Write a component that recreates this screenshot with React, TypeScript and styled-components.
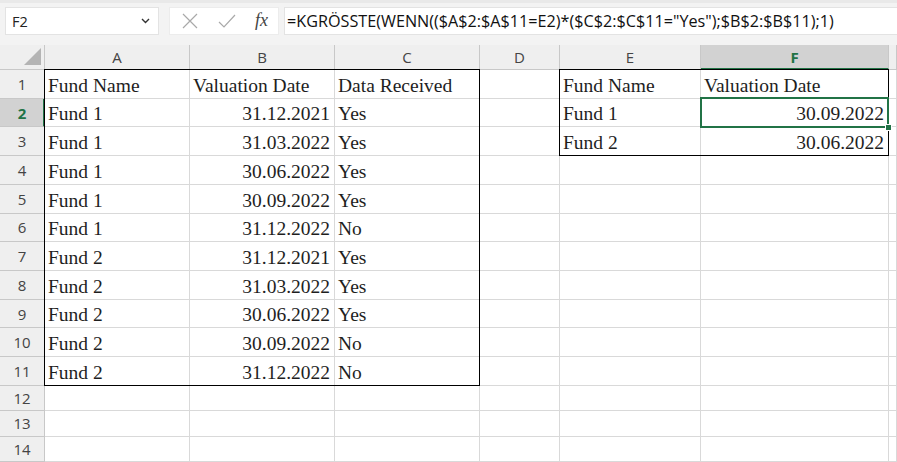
import styled, { createGlobalStyle } from "styled-components";

const GlobalStyle = createGlobalStyle`
  html, body {
    margin: 0;
    padding: 0;
    background: #ffffff;
    overflow: hidden;
  }
  * {
    box-sizing: border-box;
  }
`;

const GREEN = "#217346";
const GRID = "#d9d9d9";
const HEAD_LINE = "#c8c8c8";

const COLS = ["A", "B", "C", "D", "E", "F", "G"];
const FORMULA =
  '=KGRÖSSTE(WENN(($A$2:$A$11=E2)*($C$2:$C$11="Yes");$B$2:$B$11);1)';

type Align = "left" | "right";

interface ICell {
  text: string;
  align: Align;
}

const leftRows: [string, string, string][] = [
  ["Fund 1", "31.12.2021", "Yes"],
  ["Fund 1", "31.03.2022", "Yes"],
  ["Fund 1", "30.06.2022", "Yes"],
  ["Fund 1", "30.09.2022", "Yes"],
  ["Fund 1", "31.12.2022", "No"],
  ["Fund 2", "31.12.2021", "Yes"],
  ["Fund 2", "31.03.2022", "Yes"],
  ["Fund 2", "30.06.2022", "Yes"],
  ["Fund 2", "30.09.2022", "No"],
  ["Fund 2", "31.12.2022", "No"],
];

// row index (1-based) -> column letter -> cell
const buildCells = () => {
  const cells: Record<number, Record<string, ICell>> = {};
  cells[1] = {
    A: { text: "Fund Name", align: "left" },
    B: { text: "Valuation Date", align: "left" },
    C: { text: "Data Received", align: "left" },
    E: { text: "Fund Name", align: "left" },
    F: { text: "Valuation Date", align: "left" },
  };
  leftRows.forEach(([a, b, c], i) => {
    cells[i + 2] = {
      A: { text: a, align: "left" },
      B: { text: b, align: "right" },
      C: { text: c, align: "left" },
    };
  });
  cells[2].E = { text: "Fund 1", align: "left" };
  cells[2].F = { text: "30.09.2022", align: "right" };
  cells[3].E = { text: "Fund 2", align: "left" };
  cells[3].F = { text: "30.06.2022", align: "right" };
  return cells;
};

const Page = styled.div`
  width: 897px;
  height: 462px;
  display: flex;
  flex-direction: column;
  background: #ffffff;
  overflow: hidden;
`;

const Toolbar = styled.div`
  height: 45px;
  flex: none;
  display: flex;
  align-items: flex-start;
  gap: 10px;
  padding: 4px 0 0 5px;
  background: #f3f3f3;
  border-top: 3px solid #e9e9e9;
`;

const NameBox = styled.div`
  width: 154px;
  height: 28px;
  background: #ffffff;
  border: 1px solid #e3e3e3;
  display: flex;
  align-items: center;
  justify-content: space-between;
  padding: 0 8px 0 6px;
  font-family: "Open Sans", "Noto Sans", sans-serif;
  font-size: 14.5px;
  color: #222;
`;

const FxButtons = styled.div`
  width: 110px;
  height: 28px;
  background: #ffffff;
  border: 1px solid #ececec;
  display: flex;
  align-items: center;
  justify-content: space-between;
  padding: 0 10px 0 11px;
`;

const FxLabel = styled.span`
  font-family: "Liberation Serif", serif;
  font-style: italic;
  font-size: 18px;
  color: #444;
  margin-top: -2px;
`;

const FormulaInput = styled.div`
  flex: 1;
  height: 28px;
  margin-left: -5px;
  background: #ffffff;
  border: 1px solid #e3e3e3;
  border-right: none;
  display: flex;
  align-items: center;
  padding-left: 2px;
  font-family: "Open Sans", "Noto Sans", sans-serif;
  font-size: 16.2px;
  color: #111;
  white-space: nowrap;
  overflow: hidden;
`;

const Sheet = styled.div`
  flex: 1;
  display: grid;
  grid-template-columns: 45px 145px 145px 145px 80px 141px 188px 1fr;
  grid-template-rows: 25px repeat(11, 28.73px) repeat(3, 25.3px);
  overflow: hidden;
`;

const Corner = styled.div`
  grid-row: 1;
  grid-column: 1;
  background: #efefef;
  border-right: 1px solid ${HEAD_LINE};
  border-bottom: 1px solid ${HEAD_LINE};
  display: flex;
  align-items: flex-end;
  justify-content: flex-end;
  padding: 0 3px 4px 0;
`;

const ColHeader = styled.div<{ $col: number; $active?: boolean }>`
  grid-row: 1;
  grid-column: ${({ $col }) => $col};
  background: ${({ $active }) => ($active ? "#d2d2d2" : "#efefef")};
  color: ${({ $active }) => ($active ? GREEN : "#444")};
  font-weight: ${({ $active }) => ($active ? 700 : 400)};
  border-right: 1px solid ${HEAD_LINE};
  border-bottom: ${({ $active }) =>
    $active ? `2px solid ${GREEN}` : `1px solid ${HEAD_LINE}`};
  display: flex;
  align-items: center;
  justify-content: center;
  padding-top: ${({ $active }) => ($active ? "1px" : "0")};
  font-family: "Open Sans", "Noto Sans", sans-serif;
  font-size: 15px;
`;

const RowHeader = styled.div<{ $row: number; $active?: boolean }>`
  grid-row: ${({ $row }) => $row};
  grid-column: 1;
  background: ${({ $active }) => ($active ? "#d2d2d2" : "#efefef")};
  color: ${({ $active }) => ($active ? GREEN : "#444")};
  font-weight: ${({ $active }) => ($active ? 700 : 400)};
  border-bottom: 1px solid ${HEAD_LINE};
  border-right: ${({ $active }) =>
    $active ? `2px solid ${GREEN}` : `1px solid ${HEAD_LINE}`};
  display: flex;
  align-items: center;
  justify-content: center;
  padding-left: ${({ $active }) => ($active ? "1px" : "0")};
  font-family: "Open Sans", "Noto Sans", sans-serif;
  font-size: 15px;
`;

const Cell = styled.div<{ $row: number; $col: number; $align: Align }>`
  grid-row: ${({ $row }) => $row};
  grid-column: ${({ $col }) => $col};
  border-right: 1px solid ${GRID};
  border-bottom: 1px solid ${GRID};
  display: flex;
  align-items: flex-end;
  justify-content: ${({ $align }) =>
    $align === "right" ? "flex-end" : "flex-start"};
  padding: 0 4px 1px 3px;
  font-family: "Liberation Serif", "Times New Roman", serif;
  font-size: 19.5px;
  line-height: 22px;
  color: #1e1e1e;
  white-space: nowrap;
`;

const RangeOutline = styled.div<{ $area: string }>`
  grid-area: ${({ $area }) => $area};
  margin: -1px 0 0 -1px;
  border: 1px solid #000000;
  pointer-events: none;
  z-index: 1;
`;

const Selection = styled.div<{ $area: string }>`
  grid-area: ${({ $area }) => $area};
  position: relative;
  margin: -2px 0 -1px -1px;
  border: 2px solid ${GREEN};
  pointer-events: none;
  z-index: 2;
`;

const FillHandle = styled.span`
  position: absolute;
  right: -5px;
  bottom: -5px;
  width: 7px;
  height: 7px;
  background: ${GREEN};
  border: 1px solid #ffffff;
`;

const CloseIcon = () => (
  <svg width="18" height="18" viewBox="0 0 18 18">
    <path d="M2 2 L16 16 M16 2 L2 16" stroke="#a9a9a9" strokeWidth="1.2" />
  </svg>
);

const CheckIcon = () => (
  <svg width="20" height="18" viewBox="0 0 20 18">
    <path d="M2 10 L7 15 L18 3" stroke="#a9a9a9" strokeWidth="1.2" fill="none" />
  </svg>
);

const Chevron = () => (
  <svg width="9" height="6" viewBox="0 0 9 6">
    <path d="M1 1 L4.5 4.5 L8 1" stroke="#333" strokeWidth="1.4" fill="none" />
  </svg>
);

const CornerTriangle = () => (
  <svg width="17" height="17" viewBox="0 0 17 17">
    <polygon points="17,0 17,17 0,17" fill="#b4b4b4" />
  </svg>
);

const App = () => {
  const cells = buildCells();
  const rowCount = 14;

  return (
    <>
      <GlobalStyle />
      <Page>
        <Toolbar>
          <NameBox>
            <span>F2</span>
            <Chevron />
          </NameBox>
          <FxButtons>
            <CloseIcon />
            <CheckIcon />
            <FxLabel>fx</FxLabel>
          </FxButtons>
          <FormulaInput>{FORMULA}</FormulaInput>
        </Toolbar>

        <Sheet>
          <Corner>
            <CornerTriangle />
          </Corner>
          {COLS.map((c, i) => (
            <ColHeader key={c} $col={i + 2} $active={c === "F"}>
              {c === "G" ? "" : c}
            </ColHeader>
          ))}

          {Array.from({ length: rowCount }, (_, r) => {
            const row = r + 1;
            return [
              <RowHeader key={`h${row}`} $row={row + 1} $active={row === 2}>
                {row}
              </RowHeader>,
              ...COLS.map((c, ci) => {
                const cell = cells[row]?.[c];
                return (
                  <Cell
                    key={`${c}${row}`}
                    $row={row + 1}
                    $col={ci + 2}
                    $align={cell?.align ?? "left"}
                  >
                    {cell?.text}
                  </Cell>
                );
              }),
            ];
          })}

          <RangeOutline $area="2 / 2 / 13 / 5" />
          <RangeOutline $area="2 / 6 / 5 / 8" />
          <Selection $area="3 / 7 / 4 / 8">
            <FillHandle />
          </Selection>
        </Sheet>
      </Page>
    </>
  );
};

export default App;
